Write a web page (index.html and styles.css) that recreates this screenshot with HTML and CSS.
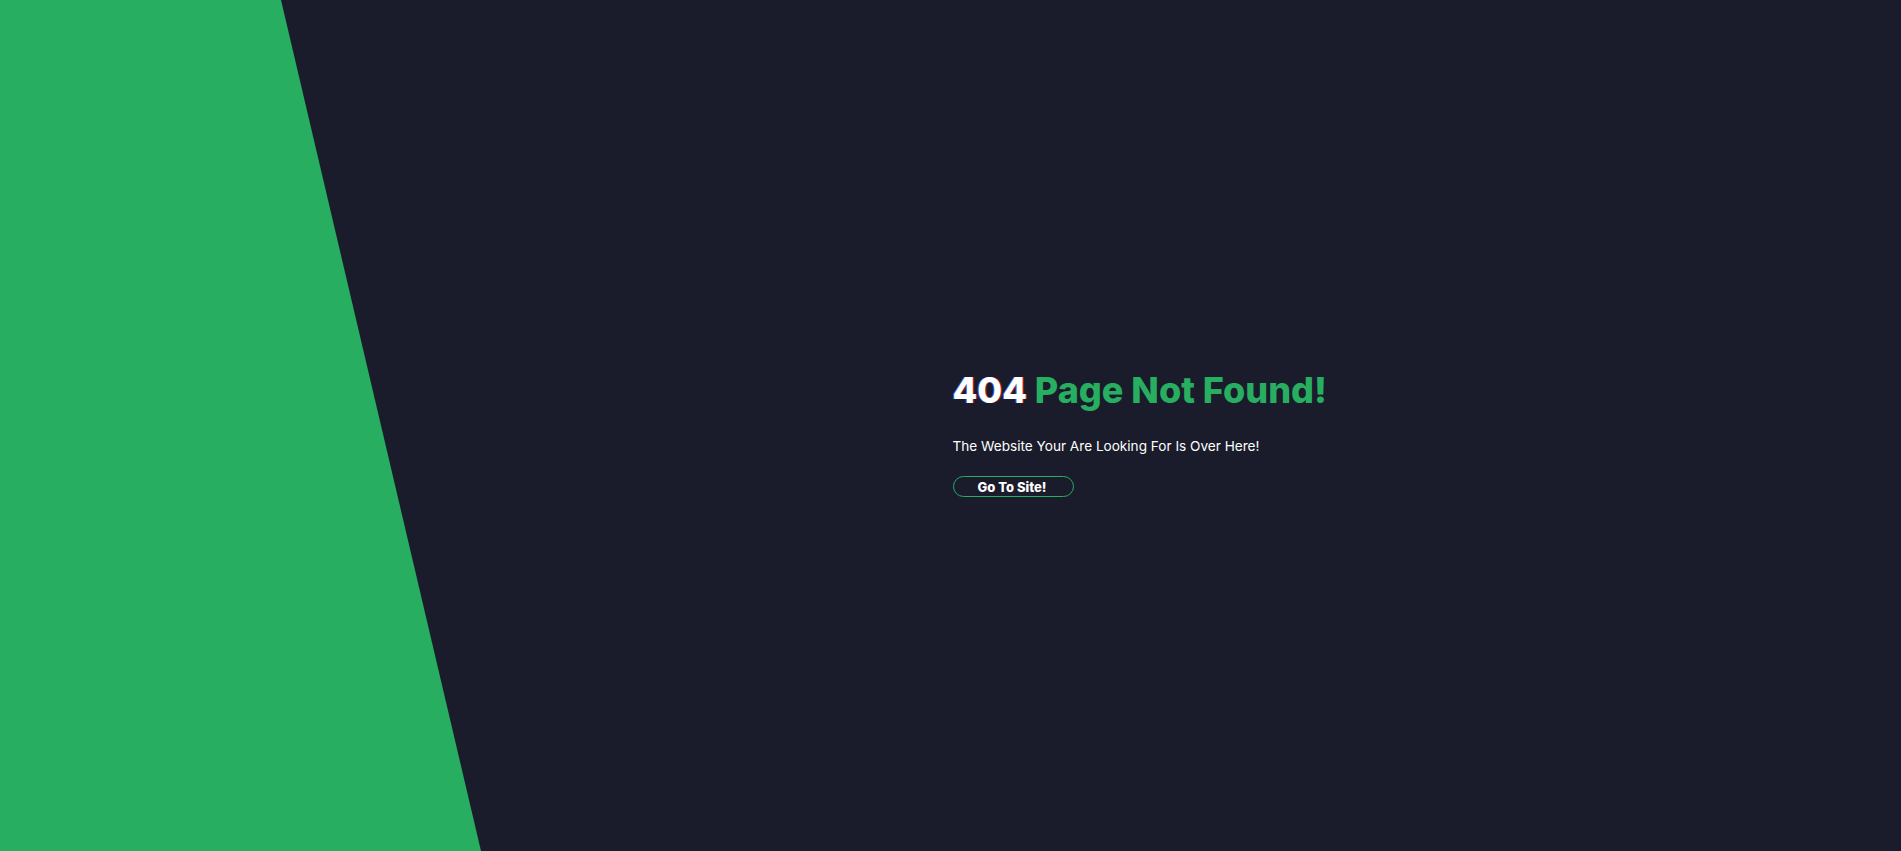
FILE: index.html
```html
<!DOCTYPE html>
<html lang="en">
<head>
<meta charset="utf-8">
<title>404 Page Not Found</title>
<link rel="stylesheet" href="styles.css">
</head>
<body>
<div class="page">
  <div class="shape"></div>
  <main class="content">
    <h1 class="title"><span class="code">404</span> Page Not Found!</h1>
    <p class="lead">The Website Your Are Looking For Is Over Here!</p>
    <a class="btn" href="#">Go To Site!</a>
  </main>
</div>
</body>
</html>
```
FILE: styles.css
```css
html, body {
  margin: 0;
  padding: 0;
  height: 100%;
}
body {
  background: #1a1c2b;
  font-family: "Inter", "Noto Sans", sans-serif;
  color: #ffffff;
  overflow: hidden;
}
.page {
  position: relative;
  height: 100vh;
  display: grid;
  grid-template-columns: 50% 50%;
  align-items: center;
}
.shape {
  position: absolute;
  left: 0;
  top: 0;
  width: 481px;
  height: 100%;
  background: #27ae60;
  clip-path: polygon(0 0, 281px 0, 100% 100%, 0 100%);
}
.content {
  grid-column: 2;
  padding-left: 2px;
  padding-top: 14px;
}
.title {
  margin: 0;
  font-size: 36px;
  font-weight: 800;
  line-height: 44px;
  color: #27ae60;
  letter-spacing: 0;
}
.code {
  color: #ffffff;
  text-shadow: -1px 0 rgba(70, 120, 255, 0.7), 1px 0 rgba(224, 37, 47, 0.7);
}
.lead {
  margin: 24px 0 0;
  font-size: 13.6px;
  line-height: 20px;
  font-weight: 400;
}
.btn {
  display: inline-flex;
  justify-content: center;
  align-items: center;
  box-sizing: border-box;
  margin-top: 20px;
  width: 121px;
  height: 21px;
  border: 1px solid #27ae60;
  border-radius: 11px;
  color: #ffffff;
  text-decoration: none;
  font-size: 13px;
  font-weight: 800;
  padding-right: 2px;
}
```
